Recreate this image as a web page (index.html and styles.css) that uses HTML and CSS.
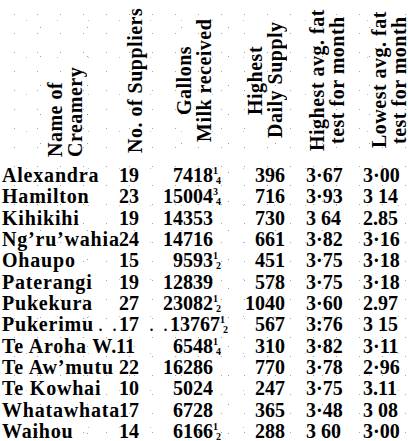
FILE: index.html
```html
<!DOCTYPE html>
<html lang="en">
<head>
<meta charset="utf-8">
<title>Creamery Returns</title>
<link rel="stylesheet" href="styles.css">
</head>
<body>
<div class="sheet">
  <div class="head">
    <div class="hc hc-name"><div class="vt vt-start">Name of<br>Creamery</div></div>
    <div class="hc hc-sup"><div class="vt">No. of Suppliers</div></div>
    <div class="hc hc-gal"><div class="vt">Gallons<br>Milk received</div></div>
    <div class="hc hc-day"><div class="vt">Highest<br>Daily Supply</div></div>
    <div class="hc hc-hi"><div class="vt">Highest avg. fat<br>test for month</div></div>
    <div class="hc hc-lo"><div class="vt">Lowest avg. fat<br>test for month</div></div>
  </div>

  <div class="row"><span class="name">Alexandra</span><span class="sup">19</span><span class="gal">7418<span class="fr"><i>1</i><i>4</i></span></span><span class="day">396</span><span class="hi">3·67</span><span class="lo">3·00</span></div>
  <div class="row"><span class="name">Hamilton</span><span class="sup">23</span><span class="gal">15004<span class="fr"><i>3</i><i>4</i></span></span><span class="day">716</span><span class="hi">3·93</span><span class="lo">3 14</span></div>
  <div class="row"><span class="name">Kihikihi</span><span class="sup">19</span><span class="gal">14353<span class="fr"></span></span><span class="day">730</span><span class="hi">3 64</span><span class="lo">2.85</span></div>
  <div class="row"><span class="name">Ng’ru’wahia</span><span class="sup">24</span><span class="gal">14716<span class="fr"></span></span><span class="day">661</span><span class="hi">3·82</span><span class="lo">3·16</span></div>
  <div class="row"><span class="name">Ohaupo</span><span class="sup">15</span><span class="gal">9593<span class="fr"><i>1</i><i>2</i></span></span><span class="day">451</span><span class="hi">3·75</span><span class="lo">3·18</span></div>
  <div class="row"><span class="name">Paterangi</span><span class="sup">19</span><span class="gal">12839<span class="fr"></span></span><span class="day">578</span><span class="hi">3·75</span><span class="lo">3·18</span></div>
  <div class="row"><span class="name">Pukekura</span><span class="sup">27</span><span class="gal">23082<span class="fr"><i>1</i><i>2</i></span></span><span class="day">1040</span><span class="hi">3·60</span><span class="lo">2.97</span></div>
  <div class="row"><span class="name">Pukerimu<span class="dots">. .</span></span><span class="sup">17</span><span class="gal"><span class="dots">. .</span>13767<span class="fr"><i>1</i><i>2</i></span></span><span class="day">567</span><span class="hi">3:76</span><span class="lo">3 15</span></div>
  <div class="row"><span class="name">Te Aroha W.</span><span class="sup sup-tight">11</span><span class="gal">6548<span class="fr"><i>1</i><i>4</i></span></span><span class="day">310</span><span class="hi">3·82</span><span class="lo">3·11</span></div>
  <div class="row"><span class="name">Te Aw’mutu</span><span class="sup">22</span><span class="gal">16286<span class="fr"></span></span><span class="day">770</span><span class="hi">3·78</span><span class="lo">2·96</span></div>
  <div class="row"><span class="name">Te Kowhai</span><span class="sup">10</span><span class="gal">5024<span class="fr"></span></span><span class="day">247</span><span class="hi">3·75</span><span class="lo">3.11</span></div>
  <div class="row"><span class="name">Whatawhata</span><span class="sup">17</span><span class="gal">6728<span class="fr"></span></span><span class="day">365</span><span class="hi">3·48</span><span class="lo">3 08</span></div>
  <div class="row"><span class="name">Waihou</span><span class="sup">14</span><span class="gal">6166<span class="fr"><i>1</i><i>2</i></span></span><span class="day">288</span><span class="hi">3 60</span><span class="lo">3·00</span></div>
</div>
</body>
</html>
```
FILE: styles.css
```css
html, body {
  margin: 0;
  padding: 0;
  background: #ffffff;
}

body {
  font-family: "Liberation Serif", "Times New Roman", serif;
  color: #000000;
  overflow: hidden;
}

.sheet {
  width: 408px;
  height: 441px;
  overflow: hidden;
  background-color: #ffffff;
  background-image:
    radial-gradient(circle, rgba(90, 90, 90, 0.55) 0.6px, transparent 0.9px),
    radial-gradient(circle, rgba(120, 120, 120, 0.45) 0.6px, transparent 0.9px),
    radial-gradient(circle, rgba(60, 60, 60, 0.5) 0.7px, transparent 1px);
  background-size: 23px 19px, 31px 37px, 47px 29px;
  background-position: 3px 5px, 11px 2px, 17px 13px;
}

.head {
  display: grid;
  grid-template-columns: 118px 27px 77px 66px 64px 56px;
  height: 160px;
  margin-bottom: 5px;
}

.hc {
  display: flex;
  height: 160px;
  align-items: stretch;
}

.vt {
  writing-mode: vertical-rl;
  transform: rotate(180deg);
  height: 160px;
  text-align: center;
  font-weight: bold;
  font-size: 20px;
  line-height: 19.5px;
  letter-spacing: 0.5px;
  white-space: nowrap;
}

.vt-start {
  text-align: start;
  padding-top: 3px;
  box-sizing: border-box;
}

.hc-name { padding-left: 46px; }
.hc-sup { padding-left: 8px; }
.hc-gal { padding-left: 30px; }
.hc-day { padding-left: 24px; }
.hc-hi { padding-left: 20px; }
.hc-lo { padding-left: 18px; }

.row {
  display: grid;
  grid-template-columns: 118px 27px 77px 66px 64px 56px;
  height: 21.33px;
  line-height: 21.33px;
  font-size: 20px;
  font-weight: bold;
  white-space: nowrap;
}

.name {
  padding-left: 2px;
  letter-spacing: 0.8px;
  overflow: visible;
}

.sup {
  padding-left: 1px;
}

.sup-tight {
  margin-left: -3px;
}

.gal {
  text-align: right;
  padding-right: 1px;
}

.day {
  text-align: right;
  padding-right: 3px;
}

.hi {
  padding-left: 18px;
}

.lo {
  padding-left: 11px;
}

.fr {
  display: inline-block;
  width: 8px;
  height: 20px;
  vertical-align: top;
  padding-top: 1px;
  font-size: 10px;
  line-height: 10px;
  text-align: left;
}

.fr i {
  font-style: normal;
  display: block;
  height: 10px;
}

.fr i + i {
  text-align: right;
}

.dots {
  font-weight: normal;
  letter-spacing: 2px;
  padding-left: 4px;
}
```
